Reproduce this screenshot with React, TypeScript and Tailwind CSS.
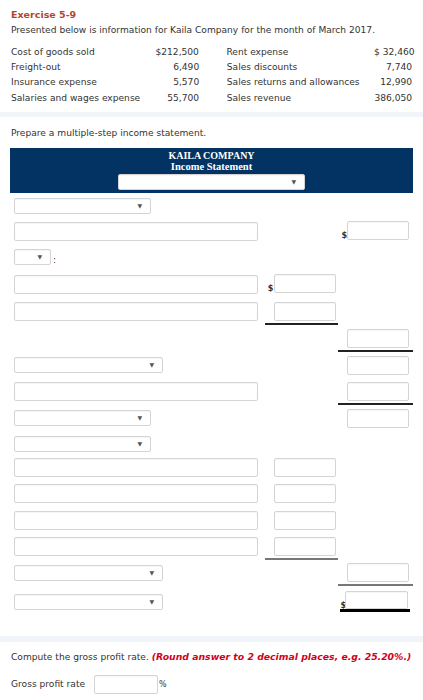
import React from "react";

const font = { fontFamily: '"DejaVu Sans", Verdana, sans-serif' };

function Sel({ w, arrowRight = 8 }: { w: number; arrowRight?: number }) {
  return (
    <div
      className="relative h-[16px] rounded-[2px] border border-[#d4d4d4] bg-white shadow-[inset_0_1px_1px_rgba(0,0,0,0.04)]"
      style={{ width: w }}
    >
      <span
        className="absolute top-[4px] text-[6px] leading-none text-[#555]"
        style={{ right: arrowRight }}
      >
        ▼
      </span>
    </div>
  );
}

function Inp({ w, h = 19 }: { w: number; h?: number }) {
  return (
    <div
      className="rounded-[2px] border border-[#d4d4d4] bg-white shadow-[inset_0_1px_1px_rgba(0,0,0,0.04)]"
      style={{ width: w, height: h }}
    />
  );
}

type Cell = { kind: "none" } | { kind: "inp"; dollar?: boolean; line?: "black" | "gray" | "thick" };

function Row({
  h,
  left,
  mid,
  right,
}: {
  h: number;
  left: React.ReactNode;
  mid?: Cell;
  right?: Cell;
}) {
  const renderCell = (c: Cell | undefined) => {
    if (!c || c.kind === "none") return null;
    const lineCls =
      c.line === "black"
        ? "border-b-2 border-[#222]"
        : c.line === "gray"
        ? "border-b-2 border-[#777]"
        : "";
    if (c.line === "thick") {
      return (
        <div className="flex items-end pl-[2px]">
          <div className="flex items-end border-b-[3px] border-black pr-[2px]">
            <span className="mb-[-1px] w-[5px] text-[8px] font-bold leading-none text-[#333]">$</span>
            <Inp w={63} h={18} />
          </div>
        </div>
      );
    }
    return (
      <div className={`flex items-end pb-[2px] ${lineCls}`}>
        <span
          className={`w-[9px] pl-[3px] text-[8px] font-bold leading-none text-[#333] ${
            c.dollar ? "" : "invisible"
          }`}
        >
          $
        </span>
        <Inp w={62} />
      </div>
    );
  };
  return (
    <div className="flex items-start" style={{ height: h }}>
      <div className="w-[256px] pl-[4px]">{left}</div>
      <div className="w-[74px]">{renderCell(mid)}</div>
      <div className="w-[75px]">{renderCell(right)}</div>
    </div>
  );
}

const data: [string, string, string, string][] = [
  ["Cost of goods sold", "$212,500", "Rent expense", "$ 32,460"],
  ["Freight-out", "6,490", "Sales discounts", "7,740"],
  ["Insurance expense", "5,570", "Sales returns and allowances", "12,990"],
  ["Salaries and wages expense", "55,700", "Sales revenue", "386,050"],
];

const serif = { fontFamily: '"Liberation Serif", "Times New Roman", serif' };

export default function App() {
  const I = { kind: "inp" } as Cell;
  return (
    <div className="h-[700px] w-[423px] bg-white text-[#333]" style={font}>
      <div className="px-[11px] pt-[9px]">
        <div className="text-[9.5px] font-bold leading-[12px] text-[#b4462b]">Exercise 5-9</div>
        <div className="mt-[3px] whitespace-nowrap text-[9.1px] leading-[12px]">
          Presented below is information for Kaila Company for the month of March 2017.
        </div>
        <div className="mt-[9px] whitespace-nowrap text-[9.1px]">
          {data.map((r, i) => (
            <div key={i} className="flex h-[15.3px] items-center">
              <div className="w-[144px]">{r[0]}</div>
              <div className="w-[47px] text-right">{r[1]}</div>
              <div className="w-[28px]" />
              <div className="w-[150px]">{r[2]}</div>
              <div className="w-[38px] text-right">{r[3]}</div>
            </div>
          ))}
        </div>
      </div>
      <div className="mt-[6px] h-[5px] bg-[#f1f4f8]" />
      <div className="px-[10px]">
        <div className="mt-[10px] pl-[1px] text-[9.1px] leading-[12px]">Prepare a multiple-step income statement.</div>
        <div className="mt-[9px] flex h-[45px] flex-col items-center bg-[#033363] pt-[3px]">
          <div className="text-[10px] font-bold leading-[10px] text-white" style={serif}>
            KAILA COMPANY
          </div>
          <div className="text-[10.5px] font-bold leading-[12px] text-white" style={serif}>
            Income Statement
          </div>
          <div className="mt-[1px]">
            <Sel w={187} />
          </div>
        </div>
        <div className="mt-[5px]">
          <Row h={23} left={<Sel w={137} />} />
          <Row h={28} left={<div className="mt-[1px]"><Inp w={244} /></div>} right={{ kind: "inp", dollar: true }} />
          <Row
            h={25}
            left={
              <div className="flex items-end">
                <Sel w={37} />
                <span className="ml-[2px] text-[9px] leading-none text-[#333]">:</span>
              </div>
            }
          />
          <Row h={28} left={<div className="mt-[1px]"><Inp w={244} /></div>} mid={{ kind: "inp", dollar: true }} />
          <Row h={27} left={<Inp w={244} />} mid={{ kind: "inp", line: "black" }} />
          <Row h={27} left={null} right={{ kind: "inp", line: "black" }} />
          <Row h={26} left={<div className="mt-[1px]"><Sel w={149} /></div>} right={I} />
          <Row h={27} left={<Inp w={244} />} right={{ kind: "inp", line: "black" }} />
          <Row h={27} left={<div className="mt-[1px]"><Sel w={137} /></div>} right={I} />
          <Row h={22} left={<Sel w={137} />} />
          <Row h={26} left={<Inp w={244} />} mid={I} />
          <Row h={27} left={<Inp w={244} />} mid={I} />
          <Row h={26} left={<Inp w={244} />} mid={I} />
          <Row h={26} left={<Inp w={244} />} mid={{ kind: "inp", line: "gray" }} />
          <Row h={28} left={<div className="mt-[2px]"><Sel w={149} /></div>} right={{ kind: "inp", line: "gray" }} />
          <Row h={30} left={<div className="mt-[3px]"><Sel w={149} /></div>} right={{ kind: "inp", line: "thick" }} />
        </div>
      </div>
      <div className="mt-[15px] h-[6px] bg-[#f1f4f8]" />
      <div className="px-[11px]">
        <div className="mt-[9px] whitespace-nowrap text-[9.1px] leading-[12px]">
          Compute the gross profit rate.{" "}
          <span className="text-[9.3px] font-bold italic text-[#d0021b]">(Round answer to 2 decimal places, e.g. 25.20%.)</span>
        </div>
        <div className="mt-[12px] flex items-center">
          <span className="w-[83px] text-[9.1px]">Gross profit rate</span>
          <Inp w={64} h={19} />
          <span className="ml-[1px] text-[8px]">%</span>
        </div>
      </div>
    </div>
  );
}
